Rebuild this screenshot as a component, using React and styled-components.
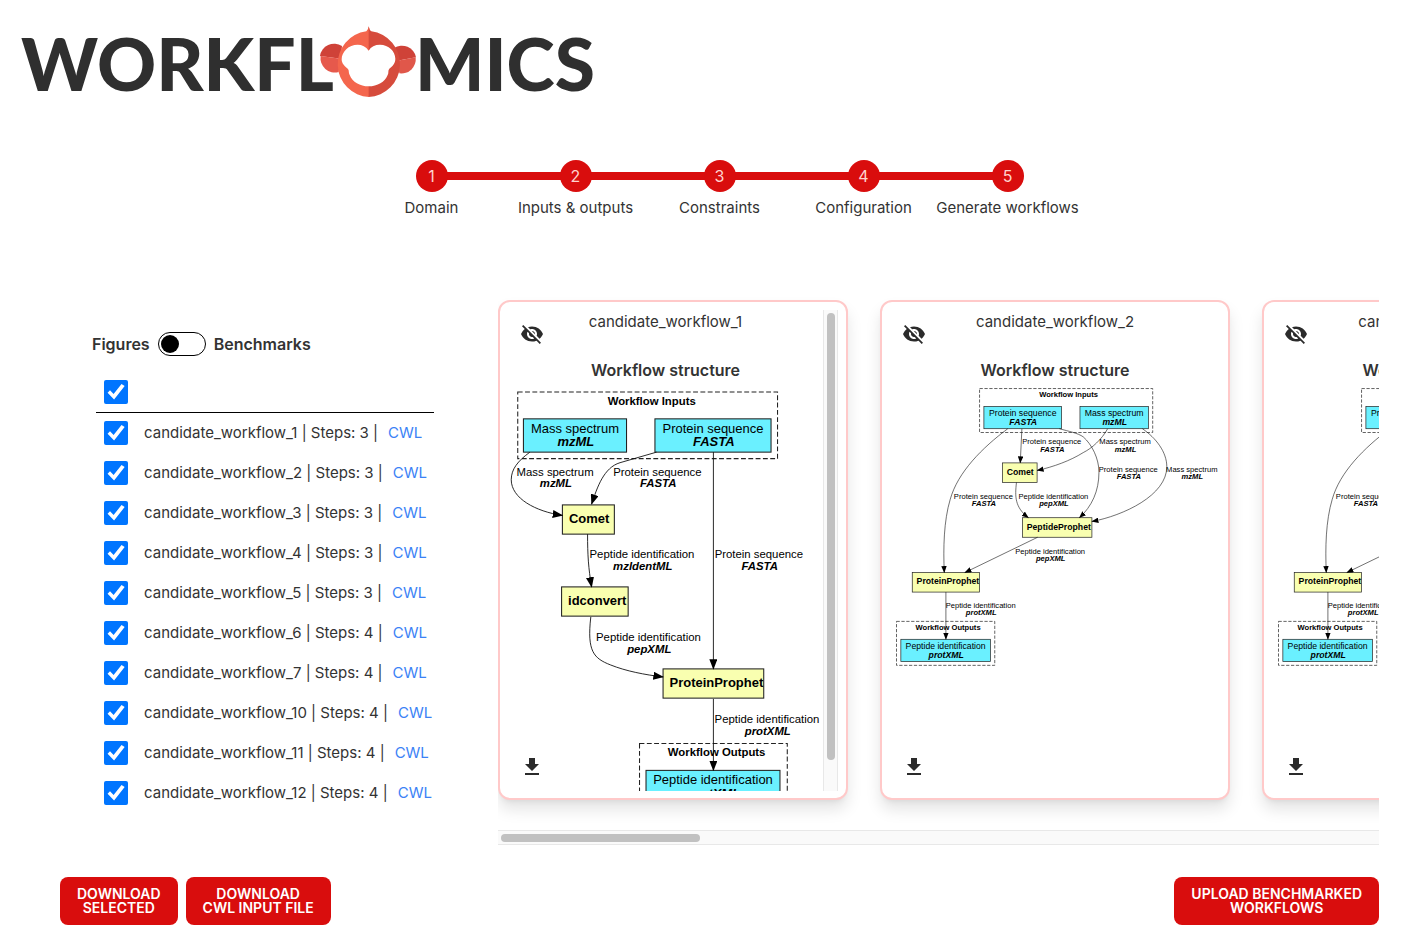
import React, { useState } from "react";
import styled, { createGlobalStyle } from "styled-components";
import { MdVisibilityOff, MdDownload } from "react-icons/md";

const GlobalStyle = createGlobalStyle`
  *, *::before, *::after { box-sizing: border-box; }
  body {
    margin: 0;
    background: #fff;
    color: #333;
    font-family: Inter, "Noto Sans", "Liberation Sans", sans-serif;
    font-size: 15px;
    line-height: 24px;
  }
`;

const RED = "#d90d0d";

const Page = styled.div`
  padding: 20px 0 24px;
`;

const Header = styled.header`
  padding: 0 20px;
`;

const LogoSvg = styled.svg`
  display: block;
  width: 590px;
  height: 90px;
  overflow: visible;
`;

const Wordmark = styled.text`
  font-family: Lato, "Open Sans", sans-serif;
  font-weight: 900;
  font-size: 73px;
  fill: #2f2f2f;
`;

const Content = styled.main`
  padding: 0 44px 0 60px;
`;

const Steps = styled.ol`
  display: grid;
  grid-template-columns: repeat(5, 144px);
  justify-content: center;
  list-style: none;
  margin: 46px 0 0;
  padding: 0;
`;

const Step = styled.li`
  position: relative;
  display: grid;
  grid-template-rows: 40px 24px;
  justify-items: center;
  align-items: center;
  white-space: nowrap;

  &:not(:first-child)::before {
    content: "";
    position: absolute;
    top: 16px;
    right: 50%;
    width: 100%;
    height: 8px;
    background: ${RED};
  }
`;

const StepNumber = styled.span`
  position: relative;
  z-index: 1;
  display: grid;
  place-items: center;
  width: 32px;
  height: 32px;
  border-radius: 50%;
  background: ${RED};
  color: #ffd3cf;
  font-size: 16px;
`;

const Workspace = styled.div`
  display: flex;
  align-items: flex-start;
  margin-top: 64px;
`;

const Sidebar = styled.section`
  flex: none;
  width: 438px;
  padding: 48px 64px 0 32px;
`;

const ToggleRow = styled.label`
  display: flex;
  align-items: center;
  gap: 8px;
  font-size: 16px;
  font-weight: 600;
`;

const Toggle = styled.input`
  appearance: none;
  display: flex;
  align-items: center;
  justify-content: ${(p) => (p.checked ? "flex-end" : "flex-start")};
  width: 48px;
  height: 24px;
  margin: 0;
  padding: 0 2px;
  border: 1px solid #000;
  border-radius: 12px;
  background: #fff;

  &::before {
    content: "";
    width: 18px;
    height: 18px;
    border-radius: 50%;
    background: #000;
  }
`;

const WorkflowTable = styled.table`
  width: 338px;
  margin: 16px 0 0 4px;
  border-collapse: separate;
  border-spacing: 0;
`;

const HeadCell = styled.th`
  height: 41px;
  padding: 8px;
  border-bottom: 1px solid #000;
`;

const CheckCell = styled.td`
  width: 40px;
  height: 40px;
  padding: 8px;
`;

const NameCell = styled.td`
  padding: 0 0 0 8px;
  white-space: nowrap;
`;

const Check = styled.input`
  appearance: none;
  display: block;
  width: 24px;
  height: 24px;
  margin: 0;
  border: 1px solid #767676;
  border-radius: 2px;
  background: #fff;

  &:checked {
    border: 0;
    background: #0075ff;
  }

  &:checked::before {
    content: "";
    display: block;
    width: 24px;
    height: 24px;
    background: #fff;
    clip-path: polygon(15% 53%, 25% 43%, 40% 58%, 73% 17%, 86% 25%, 42% 81%);
  }
`;

const CwlLink = styled.a`
  margin-left: 10px;
  color: #3b82f6;
  text-decoration: none;
`;

const Gallery = styled.section`
  flex: 1;
  min-width: 0;
`;

const CardStrip = styled.div`
  display: flex;
  gap: 32px;
  padding: 16px 0 30px;
  overflow-x: auto;
  scrollbar-width: none;
`;

const Card = styled.article`
  position: relative;
  flex: none;
  display: flex;
  width: 350px;
  height: 500px;
  padding: 8px 8px 7px;
  border: 2px solid #ffc9c9;
  border-radius: 12px;
  background: #fff;
  box-shadow: 0 10px 15px rgba(0, 0, 0, 0.1), 0 4px 6px -4px rgba(0, 0, 0, 0.1);
`;

const CardBody = styled.div`
  flex: 1;
  min-width: 0;
  overflow-y: auto;
  scrollbar-width: none;
  text-align: center;
`;

const CardTitle = styled.h2`
  margin: 0;
  font-size: 15px;
  font-weight: 400;
  line-height: 24px;
`;

const CardSubtitle = styled.h3`
  margin: 24px 0 6px;
  font-size: 16px;
  font-weight: 600;
  line-height: 24px;
`;

const IconButton = styled.button`
  position: absolute;
  left: 20px;
  ${(p) => (p.$place === "top" ? "top: 20px;" : "bottom: 19px;")}
  width: 24px;
  height: 24px;
  padding: 0;
  border: 0;
  background: none;
  color: #2b2b2b;
  font-size: 24px;
  line-height: 0;
`;

const ScrollTrack = styled.div`
  flex: none;
  padding: 3px;
  background: #fafafa;
  border: 0 solid #e8e8e8;
  ${(p) =>
    p.$vertical
      ? "width: 15px; border-width: 0 1px;"
      : "height: 15px; border-width: 1px 0;"}
`;

const ScrollThumb = styled.div`
  border-radius: 4px;
  background: #c1c1c1;
  ${(p) =>
    p.$vertical ? "width: 8px; height: 94%;" : "height: 8px; width: 199px;"}
`;

const Actions = styled.footer`
  display: flex;
  gap: 8px;
  margin-top: 32px;
`;

const ActionButton = styled.button`
  height: 48px;
  padding: 0 17px;
  border: 0;
  border-radius: 8px;
  background: ${RED};
  color: #fff;
  font: 600 14px/14px Inter, "Liberation Sans", sans-serif;
  text-transform: uppercase;
  ${(p) => p.$end && "margin-left: auto;"}
`;

const DiagramSvg = styled.svg`
  display: block;
  width: 100%;
  font-family: "Liberation Sans", Arial, sans-serif;
`;

function Logo() {
  return (
    <LogoSvg viewBox="0 0 590 90" role="img" aria-label="Workflomics">
      <Wordmark x="1" y="71">WORKFL</Wordmark>
      <Wordmark x="395" y="71">MICS</Wordmark>
      <g transform="translate(290 0) scale(0.3333)">
        <path fill="#cf4238" d="M30 108a43 42 0 0 1 66-30L92 116Z" />
        <path fill="#e6594c" d="M32 108 92 116 86 156A43 43 0 0 1 32 108Z" />
        <path fill="#cf4238" d="M252 84a43 42 0 0 1 66 28L262 122Z" />
        <path fill="#e0574a" d="M317 112 262 122 268 160A43 43 0 0 0 317 112Z" />
        <path fill="#f4664d" d="M177 231A99 99 0 0 1 169 34Q175 30 176 19L180 34Z" />
        <path fill="#d64b3c" d="M176 19Q178 31 184 34A99 99 0 0 1 176 231Z" />
        <path
          fill="#fff"
          d="M176 92C168 80 156 74 143 74C116 74 95 95 95 118C95 132 105 139 114 147C118 152 115 158 119 165C127 186 150 199 176 199C202 199 225 186 233 165C237 158 233 152 238 146C248 138 256 130 256 116C256 94 236 74 210 74C195 74 183 80 176 92Z"
        />
      </g>
    </LogoSvg>
  );
}

const graphOne = {
  width: 388,
  height: 526,
  clusters: [
    { x: 12, y: 5, w: 320, h: 82, title: "Workflow Inputs", tx: 177, ty: 21 },
    { x: 162, y: 438, w: 182, h: 82, title: "Workflow Outputs", tx: 257, ty: 453 },
  ],
  data: [
    { x: 19, y: 38, w: 127, name: "Mass spectrum", format: "mzML" },
    { x: 181, y: 38, w: 143, name: "Protein sequence", format: "FASTA" },
    { x: 170, y: 471, w: 165, name: "Peptide identification", format: "protXML" },
  ],
  tools: [
    { x: 67, y: 144, w: 64, name: "Comet" },
    { x: 66, y: 245, w: 82, name: "idconvert" },
    { x: 191, y: 346, w: 124, name: "ProteinProphet" },
  ],
  edges: [
    "M27 79C12 90 4 100 4 113C4 136 34 152 67 157",
    "M183 79L138 92C118 98 110 122 103 143",
    "M253 79V346",
    "M98 180C98 205 99 222 103 245",
    "M102 282C97 325 106 333 126 341C146 349 168 353 191 356",
    "M253 383V471",
  ],
  labels: [
    { x: 58, y: 108, name: "Mass spectrum", format: "mzML" },
    { x: 184, y: 108, name: "Protein sequence", format: "FASTA" },
    { x: 165, y: 210, name: "Peptide identification", format: "mzIdentML" },
    { x: 309, y: 210, name: "Protein sequence", format: "FASTA" },
    { x: 173, y: 312, name: "Peptide identification", format: "pepXML" },
    { x: 319, y: 413, name: "Peptide identification", format: "protXML" },
  ],
};

const graphTwo = {
  width: 608,
  height: 516,
  clusters: [
    { x: 165, y: 1, w: 319, h: 81, title: "Workflow Inputs", tx: 329, ty: 17 },
    { x: 12, y: 430, w: 181, h: 81, title: "Workflow Outputs", tx: 107, ty: 446 },
  ],
  data: [
    { x: 173, y: 34, w: 143, name: "Protein sequence", format: "FASTA" },
    { x: 350, y: 34, w: 126, name: "Mass spectrum", format: "mzML" },
    { x: 20, y: 463, w: 165, name: "Peptide identification", format: "protXML" },
  ],
  tools: [
    { x: 207, y: 138, w: 64, name: "Comet" },
    { x: 244, y: 239, w: 128, name: "PeptideProphet" },
    { x: 41, y: 340, w: 124, name: "ProteinProphet" },
  ],
  edges: [
    "M217 75C170 110 125 155 111 205C99 245 98 295 100 340",
    "M243 75L240 138",
    "M312 75C330 80 346 83 356 90C372 104 385 130 385 155C385 190 372 218 349 239",
    "M401 75C390 95 372 111 356 119C332 134 302 145 271 152",
    "M465 75C490 92 510 118 510 145C510 198 430 235 372 246",
    "M233 174C230 200 230 220 255 239",
    "M272 275L138 340",
    "M103 376V463",
  ],
  labels: [
    { x: 298, y: 103, name: "Protein sequence", format: "FASTA" },
    { x: 433, y: 103, name: "Mass spectrum", format: "mzML" },
    { x: 439, y: 154, name: "Protein sequence", format: "FASTA" },
    { x: 556, y: 154, name: "Mass spectrum", format: "mzML" },
    { x: 172, y: 204, name: "Protein sequence", format: "FASTA" },
    { x: 301, y: 204, name: "Peptide identification", format: "pepXML" },
    { x: 295, y: 305, name: "Peptide identification", format: "pepXML" },
    { x: 167, y: 405, name: "Peptide identification", format: "protXML" },
  ],
};

function Diagram({ id, graph }) {
  const arrow = `arrow-${id}`;
  return (
    <DiagramSvg viewBox={`0 0 ${graph.width} ${graph.height}`} textAnchor="middle">
      <defs>
        <marker
          id={arrow}
          markerUnits="userSpaceOnUse"
          markerWidth="13"
          markerHeight="10"
          refX="12"
          refY="5"
          orient="auto"
        >
          <path d="M0 0 13 5 0 10Z" />
        </marker>
      </defs>
      {graph.clusters.map((c) => (
        <rect
          key={c.title}
          x={c.x}
          y={c.y}
          width={c.w}
          height={c.h}
          fill="none"
          stroke="#222"
          strokeWidth="1.3"
          strokeDasharray="6 3"
        />
      ))}
      {graph.data.map((n) => (
        <g key={n.name}>
          <rect x={n.x} y={n.y} width={n.w} height="41" fill="#6af0ff" stroke="#222" strokeWidth="1.3" />
          <text x={n.x + n.w / 2} y={n.y + 17} fontSize="16">{n.name}</text>
          <text x={n.x + n.w / 2 + 1} y={n.y + 34} fontSize="16" fontWeight="700" fontStyle="italic">
            {n.format}
          </text>
        </g>
      ))}
      {graph.tools.map((n) => (
        <rect
          key={n.name}
          x={n.x}
          y={n.y}
          width={n.w}
          height="36"
          fill="#f9ffb0"
          stroke="#222"
          strokeWidth="1.3"
        />
      ))}
      {graph.edges.map((d) => (
        <path key={d} d={d} fill="none" stroke="#111" strokeWidth="1.1" markerEnd={`url(#${arrow})`} />
      ))}
      {graph.clusters.map((c) => (
        <text key={c.title} x={c.tx} y={c.ty} fontSize="14" fontWeight="700">{c.title}</text>
      ))}
      {graph.tools.map((n) => (
        <text key={n.name} x={n.x + 8} y={n.y + 22} fontSize="16" fontWeight="700" textAnchor="start">
          {n.name}
        </text>
      ))}
      {graph.labels.map((l) => (
        <g key={`${l.x}-${l.y}`} fontSize="14">
          <text x={l.x} y={l.y}>{l.name}</text>
          <text x={l.x + 1} y={l.y + 14} fontWeight="700" fontStyle="italic">{l.format}</text>
        </g>
      ))}
    </DiagramSvg>
  );
}

function WorkflowCard({ id, graph, scrolls }) {
  return (
    <Card>
      <CardBody>
        <CardTitle>candidate_workflow_{id}</CardTitle>
        <CardSubtitle>Workflow structure</CardSubtitle>
        <Diagram id={id} graph={graph} />
      </CardBody>
      {scrolls && (
        <ScrollTrack $vertical>
          <ScrollThumb $vertical />
        </ScrollTrack>
      )}
      <IconButton type="button" $place="top" aria-label="Hide workflow">
        <MdVisibilityOff />
      </IconButton>
      <IconButton type="button" $place="bottom" aria-label="Download figure">
        <MdDownload />
      </IconButton>
    </Card>
  );
}

const steps = ["Domain", "Inputs & outputs", "Constraints", "Configuration", "Generate workflows"];

const workflows = [
  [1, 3], [2, 3], [3, 3], [4, 3], [5, 3],
  [6, 4], [7, 4], [10, 4], [11, 4], [12, 4],
];

export default function App() {
  const [benchmarks, setBenchmarks] = useState(false);
  return (
    <Page>
      <GlobalStyle />
      <Header>
        <Logo />
      </Header>
      <Content>
        <Steps>
          {steps.map((label, i) => (
            <Step key={label}>
              <StepNumber>{i + 1}</StepNumber>
              <span>{label}</span>
            </Step>
          ))}
        </Steps>
        <Workspace>
          <Sidebar>
            <ToggleRow>
              Figures
              <Toggle
                type="checkbox"
                role="switch"
                checked={benchmarks}
                onChange={(e) => setBenchmarks(e.target.checked)}
              />
              Benchmarks
            </ToggleRow>
            <WorkflowTable>
              <thead>
                <tr>
                  <HeadCell colSpan={2}>
                    <Check type="checkbox" defaultChecked aria-label="Select all workflows" />
                  </HeadCell>
                </tr>
              </thead>
              <tbody>
                {workflows.map(([id, count]) => (
                  <tr key={id}>
                    <CheckCell>
                      <Check type="checkbox" id={`wf-${id}`} defaultChecked />
                    </CheckCell>
                    <NameCell>
                      <label htmlFor={`wf-${id}`}>
                        candidate_workflow_{id} | Steps: {count} |
                      </label>
                      <CwlLink href="#cwl">CWL</CwlLink>
                    </NameCell>
                  </tr>
                ))}
              </tbody>
            </WorkflowTable>
          </Sidebar>
          <Gallery>
            <CardStrip>
              <WorkflowCard id={1} graph={graphOne} scrolls />
              <WorkflowCard id={2} graph={graphTwo} />
              <WorkflowCard id={3} graph={graphTwo} />
            </CardStrip>
            <ScrollTrack>
              <ScrollThumb />
            </ScrollTrack>
          </Gallery>
        </Workspace>
        <Actions>
          <ActionButton type="button">Download<br />selected</ActionButton>
          <ActionButton type="button">Download<br />CWL input file</ActionButton>
          <ActionButton type="button" $end>Upload benchmarked<br />workflows</ActionButton>
        </Actions>
      </Content>
    </Page>
  );
}
